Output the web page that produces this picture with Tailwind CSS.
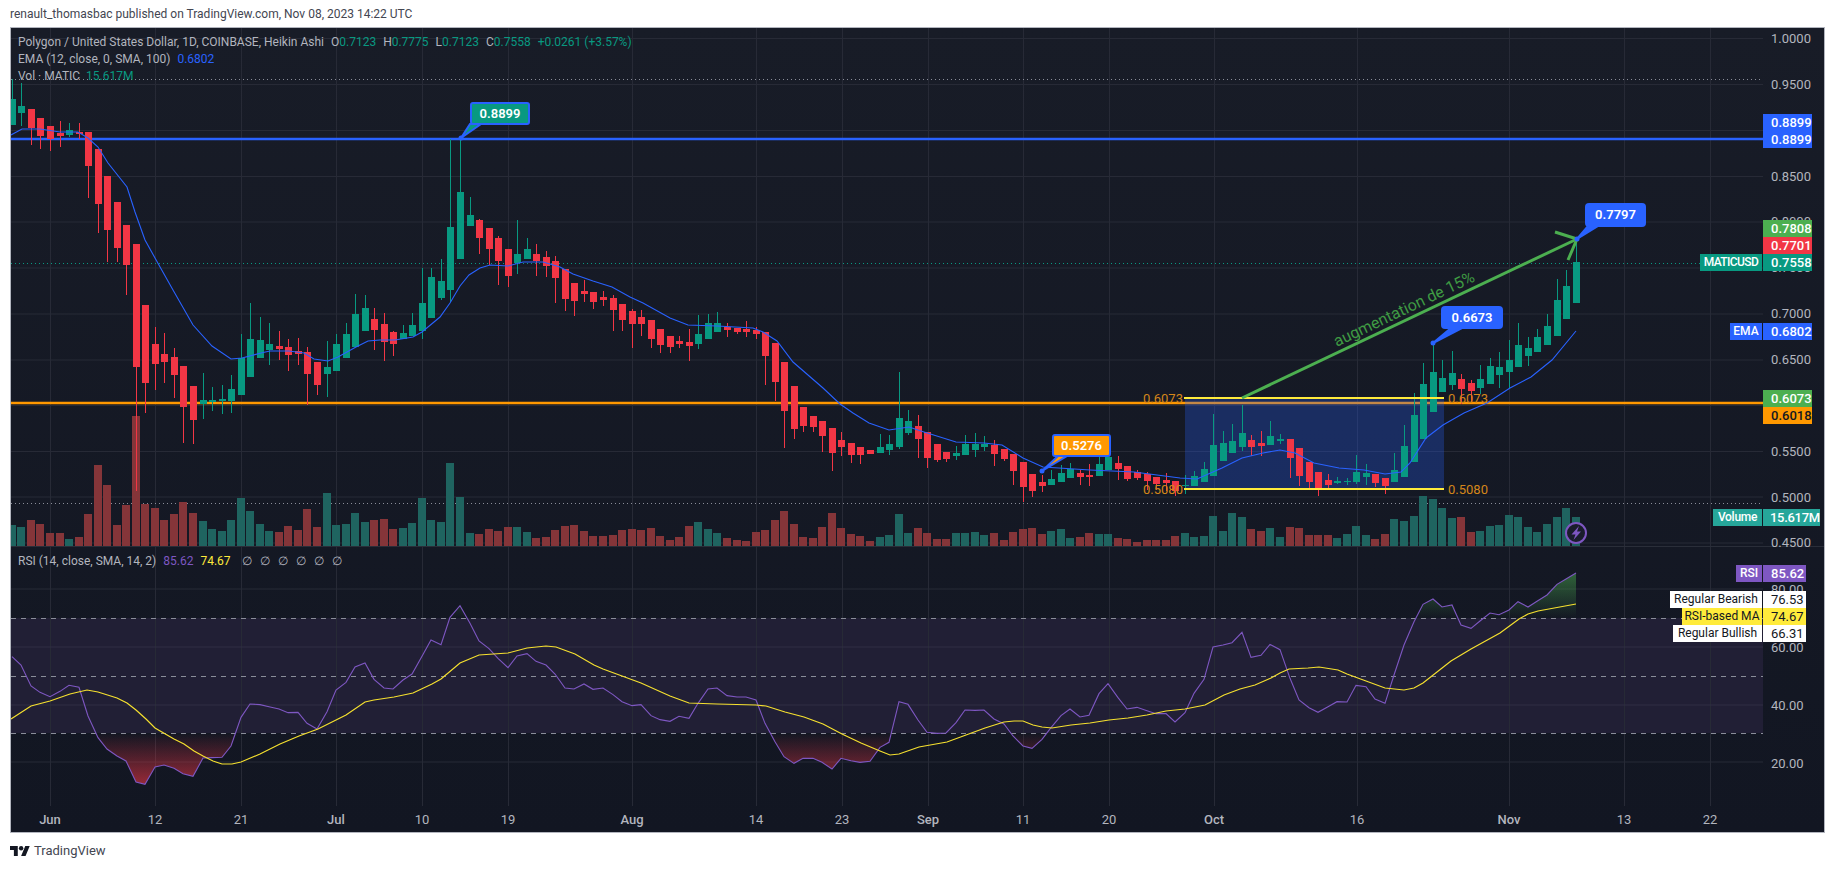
<!DOCTYPE html>
<html lang="en">
<head>
    <meta charset="UTF-8">
    <title>MATICUSD chart</title>
    <script src="https://cdn.jsdelivr.net/npm/@tailwindcss/browser@4"></script>
</head>
<body class="bg-white w-[1835px] h-[869px] overflow-hidden [font-family:Roboto,sans-serif] text-[12px]">
    <!-- Published by line -->
    <div class="h-[27px] pl-[10px] flex items-center text-[#434651] text-[12px]">renault_thomasbac published on TradingView.com, Nov 08, 2023 14:22 UTC</div>

    <!-- Chart frame -->
    <div class="relative ml-[10px] w-[1815px] h-[806px] border border-[#b2b5be] bg-linear-to-b from-[#181c27] to-[#121622] overflow-hidden">
        <svg id="chart" viewBox="11 28 1813 804" class="absolute inset-0 w-full h-full">
            <defs>
                <linearGradient id="rsiLow" gradientUnits="userSpaceOnUse" x1="0" y1="733" x2="0" y2="785">
                    <stop offset="0" stop-color="#f23645" stop-opacity="0"/>
                    <stop offset="1" stop-color="#f23645" stop-opacity="0.6"/>
                </linearGradient>
                <linearGradient id="rsiHigh" gradientUnits="userSpaceOnUse" x1="0" y1="618" x2="0" y2="573">
                    <stop offset="0" stop-color="#4caf50" stop-opacity="0"/>
                    <stop offset="1" stop-color="#4caf50" stop-opacity="0.5"/>
                </linearGradient>
                <clipPath id="belowBand"><rect x="11" y="733" width="1752" height="73"/></clipPath>
                <clipPath id="aboveBand"><rect x="11" y="546" width="1752" height="72"/></clipPath>
            </defs>
        </svg>

        <div class="relative flex flex-col h-full">
            <!-- Price pane legend -->
            <div class="h-[518px] pl-[7px] pt-[6px] text-[#b2b5be] leading-[17px]">
                <div class="flex gap-[7px]">
                    <span>Polygon / United States Dollar, 1D, COINBASE, Heikin Ashi</span>
                    <span>O<span class="text-[#089981]">0.7123</span></span>
                    <span>H<span class="text-[#089981]">0.7775</span></span>
                    <span>L<span class="text-[#089981]">0.7123</span></span>
                    <span>C<span class="text-[#089981]">0.7558</span></span>
                    <span class="text-[#089981]">+0.0261 (+3.57%)</span>
                </div>
                <div class="flex gap-[7px]">
                    <span>EMA (12, close, 0, SMA, 100)</span>
                    <span class="text-[#2962ff]">0.6802</span>
                </div>
                <div class="flex gap-[6px]">
                    <span>Vol · MATIC</span>
                    <span class="text-[#089981]">15.617M</span>
                </div>
            </div>
            <!-- RSI pane legend -->
            <div class="h-[260px] pl-[7px] pt-[7px] text-[#b2b5be] leading-[17px]">
                <div class="flex gap-[7px]">
                    <span>RSI (14, close, SMA, 14, 2)</span>
                    <span class="text-[#7e57c2]">85.62</span>
                    <span class="text-[#ffeb3b]">74.67</span>
                    <span class="flex gap-[8px] ml-[4px]"><span>∅</span><span>∅</span><span>∅</span><span>∅</span><span>∅</span><span>∅</span></span>
                </div>
            </div>
        </div>

        <!-- Callouts -->
        <div class="absolute left-[459px] top-[74px] w-[60px] h-[23px] flex items-center justify-center bg-[#089981] border-2 border-[#2962ff] rounded-[3px] text-white text-[13px] font-semibold">0.8899</div>
        <div class="absolute left-[1041px] top-[406px] w-[59px] h-[23px] flex items-center justify-center bg-[#ff9800] border-2 border-[#2962ff] rounded-[3px] text-white text-[13px] font-semibold">0.5276</div>
        <div class="absolute left-[1430px] top-[278px] w-[62px] h-[23px] flex items-center justify-center bg-[#2962ff] rounded-[4px] text-white text-[13px] font-semibold">0.6673</div>
        <div class="absolute left-[1574px] top-[175px] w-[61px] h-[24px] flex items-center justify-center bg-[#2962ff] rounded-[4px] text-white text-[13px] font-semibold">0.7797</div>

        <!-- Price scale tags -->
        <div class="absolute left-[1752px] top-[86px] w-[49px] flex flex-col text-white text-[13px] leading-[17px] font-medium bg-[#2962ff]">
            <div class="pl-[8px]">0.8899</div>
            <div class="pl-[8px]">0.8899</div>
        </div>
        <div class="absolute left-[1752px] top-[192px] w-[49px] flex flex-col text-white text-[13px] leading-[17px] font-medium">
            <div class="pl-[8px] bg-[#4caf50]">0.7808</div>
            <div class="pl-[8px] bg-[#f23645]">0.7701</div>
        </div>
        <div class="absolute left-[1689px] top-[226px] flex gap-[1px] text-white text-[13px] leading-[17px] font-medium whitespace-nowrap">
            <div class="w-[62px] text-center text-[12px] tracking-[-0.6px] bg-[#089981]">MATICUSD</div>
            <div class="w-[49px] pl-[8px] bg-[#089981]">0.7558</div>
        </div>
        <div class="absolute left-[1719px] top-[295px] flex gap-[1px] text-white text-[13px] leading-[17px] font-medium whitespace-nowrap">
            <div class="w-[32px] text-center text-[12px] bg-[#2962ff]">EMA</div>
            <div class="w-[49px] pl-[8px] bg-[#2962ff]">0.6802</div>
        </div>
        <div class="absolute left-[1752px] top-[362px] w-[49px] flex flex-col text-[13px] leading-[17px] font-medium">
            <div class="pl-[8px] text-white bg-[#4caf50]">0.6073</div>
            <div class="pl-[8px] text-[#131722] bg-[#ff9800]">0.6018</div>
        </div>
        <div class="absolute left-[1702px] top-[481px] flex gap-[1px] text-white text-[13px] leading-[17px] font-medium whitespace-nowrap">
            <div class="w-[49px] text-center text-[12px] tracking-[-0.3px] bg-[#26a69a]">Volume</div>
            <div class="w-[57px] pl-[7px] tracking-[-0.3px] bg-[#26a69a]">15.617M</div>
        </div>
        <div class="absolute left-[1725px] top-[537px] flex gap-[1px] text-white text-[13px] leading-[17px] font-medium whitespace-nowrap">
            <div class="w-[26px] text-center text-[12px] bg-[#7e57c2]">RSI</div>
            <div class="w-[43px] pl-[8px] bg-[#7e57c2]">85.62</div>
        </div>
        <div class="absolute left-[1659px] top-[563px] flex gap-[1px] text-[#131722] text-[13px] leading-[17px] whitespace-nowrap">
            <div class="w-[92px] text-center text-[12px] bg-white">Regular Bearish</div>
            <div class="w-[43px] pl-[8px] bg-white">76.53</div>
        </div>
        <div class="absolute left-[1671px] top-[580px] flex gap-[1px] text-[#131722] text-[13px] leading-[17px] whitespace-nowrap">
            <div class="w-[80px] text-center text-[12px] bg-[#ffeb3b]">RSI-based MA</div>
            <div class="w-[43px] pl-[8px] bg-[#ffeb3b]">74.67</div>
        </div>
        <div class="absolute left-[1662px] top-[597px] flex gap-[1px] text-[#131722] text-[13px] leading-[17px] whitespace-nowrap">
            <div class="w-[89px] text-center text-[12px] bg-white">Regular Bullish</div>
            <div class="w-[43px] pl-[8px] bg-white">66.31</div>
        </div>
    </div>

    <!-- Footer logo -->
    <div class="pl-[10px] pt-[11px] flex items-center gap-[4px] text-[#434651] text-[13px] leading-[14px]">
        <svg viewBox="0 4 36 18" class="w-[20px] h-[10px]" fill="#131722"><path d="M14 22H7V11H0V4h14v18zM28 22h-8l7.5-18h8L28 22z"/><circle cx="20" cy="8" r="4"/></svg>
        <span>TradingView</span>
    </div>

    <script>
        // [high, bodyTop, bodyBottom, low, green] in pixels, first bar is 4 days before Jun 1
        const candles = [
            [79,99,125,125,1],[83,106,113,126,1],[109,109,128,145,0],[118,118,136,149,0],[126,126,139,151,0],[121,133,136,147,0],[123,130,135,137,1],[123,132,134,139,0],
            [132,132,166,198,0],[149,149,204,233,0],[176,176,230,262,0],[202,202,248,262,0],[225,225,265,295,0],[244,244,367,491,0],[305,305,383,413,0],[327,344,364,390,0],
            [333,354,362,383,0],[348,357,375,398,0],[366,366,407,443,0],[386,386,420,444,0],[373,400,404,419,1],[387,400,402,411,1],[385,399,401,414,1],[375,389,401,413,1],
            [334,358,395,395,1],[303,339,377,377,1],[317,340,358,358,1],[323,344,350,365,1],[331,346,349,360,0],[339,347,355,371,0],[338,351,354,365,0],[347,352,374,405,0],
            [362,362,385,395,0],[341,367,374,397,1],[334,344,371,371,1],[323,334,358,358,1],[294,314,347,347,1],[295,308,331,331,1],[308,319,330,350,0],[313,324,342,361,0],
            [331,332,344,356,0],[325,333,339,339,1],[313,325,336,336,1],[268,303,331,339,1],[268,277,318,318,1],[259,281,298,300,1],[139,227,290,302,1],[139,192,259,259,1],
            [197,215,226,226,1],[219,220,238,254,0],[228,228,249,265,0],[236,238,261,285,0],[249,249,276,287,0],[220,254,263,274,1],[238,249,259,259,1],[244,254,261,276,0],
            [251,257,266,277,0],[256,261,278,303,0],[269,269,299,311,0],[283,283,301,316,0],[280,291,294,302,0],[292,292,302,309,0],[291,297,300,306,0],[295,298,310,331,0],
            [304,304,320,331,0],[309,311,324,348,0],[310,317,324,336,0],[320,320,339,348,0],[329,329,345,353,0],[336,336,347,353,0],[336,341,344,348,0],[329,342,346,361,0],
            [315,334,344,349,1],[314,323,339,339,1],[312,323,332,332,1],[323,327,330,337,0],[328,328,332,334,0],[321,329,332,337,0],[327,330,334,339,0],[332,332,356,385,0],
            [343,343,382,401,0],[362,362,411,448,0],[386,386,429,439,0],[407,407,426,432,0],[416,416,427,432,0],[421,421,436,452,0],[428,428,453,471,0],[432,440,447,456,0],
            [443,443,455,463,0],[447,447,455,464,0],[450,450,454,454,0],[434,447,453,453,1],[435,444,450,455,1],[372,418,447,449,1],[410,421,433,435,1],[415,426,439,458,0],
            [432,432,458,468,0],[444,444,460,462,0],[452,452,459,462,0],[446,453,456,460,1],[435,444,455,455,1],[433,444,450,457,1],[436,444,447,451,1],[440,445,454,466,0],
            [449,449,459,461,0],[454,454,471,485,0],[462,462,487,502,0],[474,474,491,497,0],[475,482,486,492,0],[470,479,485,485,1],[465,473,482,482,1],[463,469,478,478,1],
            [470,473,477,485,0],[464,475,477,486,0],[454,464,476,476,1],[457,457,470,470,1],[456,463,469,480,0],[466,466,479,481,0],[470,472,478,480,0],[472,474,481,490,0],
            [477,477,484,490,0],[473,480,483,491,0],[481,481,491,496,0],[475,485,486,494,1],[471,476,486,486,1],[462,469,482,482,1],[414,445,476,476,1],[431,443,461,461,1],
            [424,441,453,453,1],[405,433,447,451,1],[435,440,447,456,0],[431,443,446,456,0],[421,436,445,445,1],[434,439,441,444,1],[439,439,458,478,0],[448,448,476,486,0],
            [462,462,482,490,0],[472,472,488,496,0],[474,480,485,490,0],[477,481,483,484,1],[478,481,482,485,1],[455,472,482,484,1],[464,473,477,485,1],[474,474,483,487,0],
            [478,478,486,494,0],[453,470,482,482,1],[425,446,477,477,1],[393,415,462,462,1],[363,384,439,439,1],[343,372,412,412,1],[360,378,392,392,1],[351,373,385,390,1],
            [374,379,389,404,0],[380,383,391,402,0],[365,379,388,394,1],[358,366,384,384,1],[352,367,375,388,1],[340,360,372,388,1],[323,345,367,367,1],[337,348,356,366,1],
            [329,337,352,352,1],[314,326,345,345,1],[279,300,336,336,1],[270,286,319,319,1],[238,262,303,303,1]
        ];
        const volumes = [
            705,711,690,702,729,729,747,741,672,525,585,705,645,378,642,654,690,672,636,669,
            693,717,723,690,624,663,702,723,726,708,720,657,711,609,705,702,669,696,690,687,
            717,714,699,624,690,696,519,621,729,732,717,723,711,711,726,744,741,720,708,705,
            723,738,738,735,720,717,720,714,738,750,741,708,696,717,729,744,750,753,726,720,
            690,663,702,741,744,711,669,714,732,738,753,741,735,672,729,714,729,747,747,729,
            729,726,735,729,750,726,717,714,732,723,717,744,741,729,732,732,744,747,756,750,
            750,750,738,729,741,738,678,723,669,681,717,723,714,741,711,714,735,735,735,744,
            732,708,735,747,732,687,693,678,618,627,654,684,681,726,723,708,705,675,681,711,
            726,702,681,654,681
        ];
        const rsi = [
            320,345,408,427,440,424,406,412,498,563,597,618,633,696,703,651,645,655,671,679,
            624,623,622,588,502,462,464,470,477,488,487,520,537,485,420,397,351,339,388,414,
            417,390,372,319,270,284,202,167,220,273,296,325,353,318,311,334,345,372,414,417,
            402,418,414,434,455,467,464,497,509,514,499,505,460,417,414,437,441,441,450,520,
            575,620,640,625,625,637,657,625,632,637,634,592,577,455,463,510,547,550,549,518,
            480,481,480,507,522,558,588,595,568,533,497,477,501,496,431,401,443,477,472,482,
            491,491,516,488,430,388,291,285,278,247,322,316,283,299,385,450,473,487,470,455,
            456,406,410,447,460,375,285,215,163,147,171,165,225,235,213,189,194,180,155,171,
            154,135,103,87,69
        ];
        const rsiMa = [
            [11,719],[31,706],[50,701],[70,694],[87,690],[98,692],[117,698],[127,703],[136,710],[146,719],[155,728],[174,739],[184,744],[194,751],[203,756],[213,761],[222,764],[232,764],
            [241,762],[260,754],[280,744],[299,736],[318,729],[346,715],[365,702],[374,700],[394,697],[413,693],[432,684],[441,679],[460,663],[479,655],[508,653],[527,648],[546,646],[556,647],
            [575,654],[594,665],[603,669],[622,676],[641,683],[670,696],[689,703],[717,704],[756,705],[766,706],[785,712],[804,717],[823,724],[842,734],[861,743],[880,751],[890,755],[899,754],
            [919,747],[947,742],[966,735],[985,728],[1004,722],[1014,721],[1023,721],[1033,725],[1042,727],[1052,728],[1071,725],[1090,723],[1109,720],[1128,718],[1147,715],[1166,711],[1185,709],
            [1205,705],[1224,695],[1240,689],[1255,685],[1271,678],[1280,673],[1289,669],[1308,668],[1319,667],[1338,670],[1347,674],[1366,681],[1385,688],[1404,690],[1414,688],[1423,683],[1451,661],
            [1471,649],[1500,633],[1519,619],[1528,614],[1538,611],[1576,604]
        ];
        const ema = [
            [11,135],[22,129],[40,129],[60,132],[78,132],[88,138],[98,147],[108,163],[127,187],[135,212],[145,240],[155,258],[173,290],[193,325],[212,346],[231,359],[242,358],[261,353],[270,351],
            [289,351],[304,353],[314,359],[328,361],[338,357],[356,347],[368,341],[380,340],[395,340],[413,337],[422,332],[440,317],[450,303],[460,286],[469,275],[480,268],[490,265],[508,266],[523,262],
            [543,262],[560,267],[573,274],[593,281],[612,287],[630,297],[643,303],[670,318],[688,325],[717,326],[753,328],[763,332],[777,341],[793,362],[823,388],[840,404],[853,413],[869,423],[889,430],
            [909,427],[924,432],[956,442],[984,443],[1002,445],[1023,458],[1043,467],[1090,470],[1134,472],[1180,478],[1197,479],[1222,468],[1242,458],[1263,453],[1280,450],[1295,453],[1314,463],
            [1339,468],[1364,470],[1385,474],[1401,472],[1410,463],[1426,438],[1443,425],[1464,413],[1487,403],[1510,388],[1531,377],[1552,360],[1576,331]
        ];

        const gridX = [50,155,241,336,422,508,632,756,842,928,1023,1109,1214,1357,1509,1624,1710];
        const gridY = [38.5,84.5,130.5,176.5,222,268,314,360,405.5,451.5,497,543,589,647,705,762];
        const priceAxis = [['1.0000',38],['0.9500',84],['0.8500',176],['0.8000',221],['0.7500',267],['0.7000',313],['0.6500',359],['0.6000',405],['0.5500',451],['0.5000',497],['0.4500',542],['80.00',589],['60.00',647],['40.00',705],['20.00',763]];
        const timeAxis = [['Jun',50,1],['12',155],['21',241],['Jul',336,1],['10',422],['19',508],['Aug',632,1],['14',756],['23',842],['Sep',928,1],['11',1023],['20',1109],['Oct',1214,1],['16',1357],['Nov',1509,1],['13',1624],['22',1710]];

        const barX = i => Math.round(50 + 9.535 * (i - 4));
        const line = (x1, y1, x2, y2, color, extra = '') => `<line x1="${x1}" y1="${y1}" x2="${x2}" y2="${y2}" stroke="${color}" ${extra}/>`;
        const rect = (x, y, w, h, color) => `<rect x="${x}" y="${y}" width="${w}" height="${h}" fill="${color}"/>`;
        const label = (t, x, y, color, extra = '') => `<text x="${x}" y="${y}" fill="${color}" font-size="13" dominant-baseline="central" ${extra}>${t}</text>`;

        let s = document.getElementById('chart').innerHTML;

        // grid and RSI band
        s += rect(11, 618, 1752, 115, '#211f35');
        gridX.forEach(x => s += line(x + 0.5, 28, x + 0.5, 806, '#272a36'));
        gridY.forEach(y => s += line(11, y, 1763, y, y > 618 && y < 733 ? '#302e45' : '#272a36'));
        s += line(11, 546.5, 1824, 546.5, '#2a2e39');
        [618, 676, 733].forEach(y => s += line(11, y + 0.5, 1763, y + 0.5, '#8a8d99', 'stroke-dasharray="5 5"'));
        s += line(11, 79.5, 1763, 79.5, '#8a8d99', 'stroke-dasharray="1 3"');
        s += line(11, 503.5, 1763, 503.5, '#8a8d99', 'stroke-dasharray="1 3"');
        s += line(11, 263.5, 1700, 263.5, '#089981', 'stroke-dasharray="1 3"');

        // horizontal levels and range box
        s += line(11, 139, 1763, 139, '#2962ff', 'stroke-width="2.4"');
        s += line(11, 403, 1763, 403, '#ff9800', 'stroke-width="2.4"');
        s += `<rect x="1185" y="398" width="259" height="91" fill="#2962ff" fill-opacity="0.28"/>`;

        // volume
        volumes.forEach((v, i) => {
            const top = Math.round(290 + v / 3);
            s += rect(barX(i) - 4, top, 8, 546 - top, candles[i][4] ? '#1f6460' : '#853539');
        });

        // candles
        candles.forEach(([hi, top, bot, lo, up], i) => {
            const x = barX(i), color = up ? '#089981' : '#f23645';
            s += rect(x, hi, 1, lo - hi, color) + rect(x - 3, top, 7, Math.max(bot - top, 1), color);
        });

        s += `<polyline fill="none" stroke="#2962ff" stroke-width="1.1" points="${ema.join(' ')}"/>`;

        // long position range lines
        s += line(1184, 398, 1444, 398, '#ffeb3b', 'stroke-width="2"');
        s += line(1184, 489, 1444, 489, '#ffeb3b', 'stroke-width="2"');
        s += label('0.6073', 1143, 398, '#d4861a') + label('0.6073', 1448, 398, '#d4861a');
        s += label('0.5080', 1143, 489, '#d4861a') + label('0.5080', 1448, 489, '#d4861a');

        // arrow and text
        s += `<polyline fill="none" stroke="#4caf50" stroke-width="3" points="1242,398 1577,239"/>`;
        s += `<polyline fill="none" stroke="#4caf50" stroke-width="3" points="1555,232 1577,239 1568,260"/>`;
        s += `<text x="1404" y="309" fill="#3f9a43" font-size="16" text-anchor="middle" dominant-baseline="central" transform="rotate(-25.5 1404 309)">augmentation de 15%</text>`;

        // callout tails
        const tail = (pts, fill, stroke, dx, dy) => `<polygon points="${pts}" fill="${fill}" stroke="${stroke}" stroke-width="2"/><circle cx="${dx}" cy="${dy}" r="2.5" fill="#2962ff"/>`;
        s += tail('461,138 470,124 481,124', '#089981', '#2962ff', 461, 138);
        s += tail('1042,471 1058,456 1067,456', '#ff9800', '#2962ff', 1042, 471);
        s += tail('1433,343 1451,328 1462,328', '#2962ff', '#2962ff', 1433, 343);
        s += tail('1577,239 1588,226 1598,226', '#2962ff', '#2962ff', 1577, 239);

        // RSI
        const rsiPts = rsi.map((v, i) => [barX(i), 550 + v / 3]);
        const area = base => `${rsiPts[0][0]},${base} ${rsiPts.join(' ')} ${rsiPts[rsiPts.length - 1][0]},${base}`;
        s += `<polygon points="${area(733)}" fill="url(#rsiLow)" clip-path="url(#belowBand)"/>`;
        s += `<polygon points="${area(618)}" fill="url(#rsiHigh)" clip-path="url(#aboveBand)"/>`;
        s += `<polyline fill="none" stroke="#7e57c2" stroke-width="1.1" points="${rsiPts.join(' ')}"/>`;
        s += `<polyline fill="none" stroke="#f5e02f" stroke-width="1.2" points="${rsiMa.join(' ')}"/>`;

        // lightning mark
        s += `<circle cx="1576" cy="533" r="10" fill="#1a1d2b" stroke="#7e57c2" stroke-width="2"/>`;
        s += `<path d="M1579 526 L1571.5 534.5 L1575.5 534.5 L1573.5 540 L1581 531.5 L1577 531.5 Z" fill="#7e57c2"/>`;

        // axes
        priceAxis.forEach(([t, y]) => s += label(t, 1771, y, '#b2b5be'));
        timeAxis.forEach(([t, x, bold]) => s += label(t, x, 819, '#b2b5be', `text-anchor="middle" ${bold ? 'font-weight="500"' : ''}`));

        document.getElementById('chart').innerHTML = s;
    </script>
</body>
</html>
